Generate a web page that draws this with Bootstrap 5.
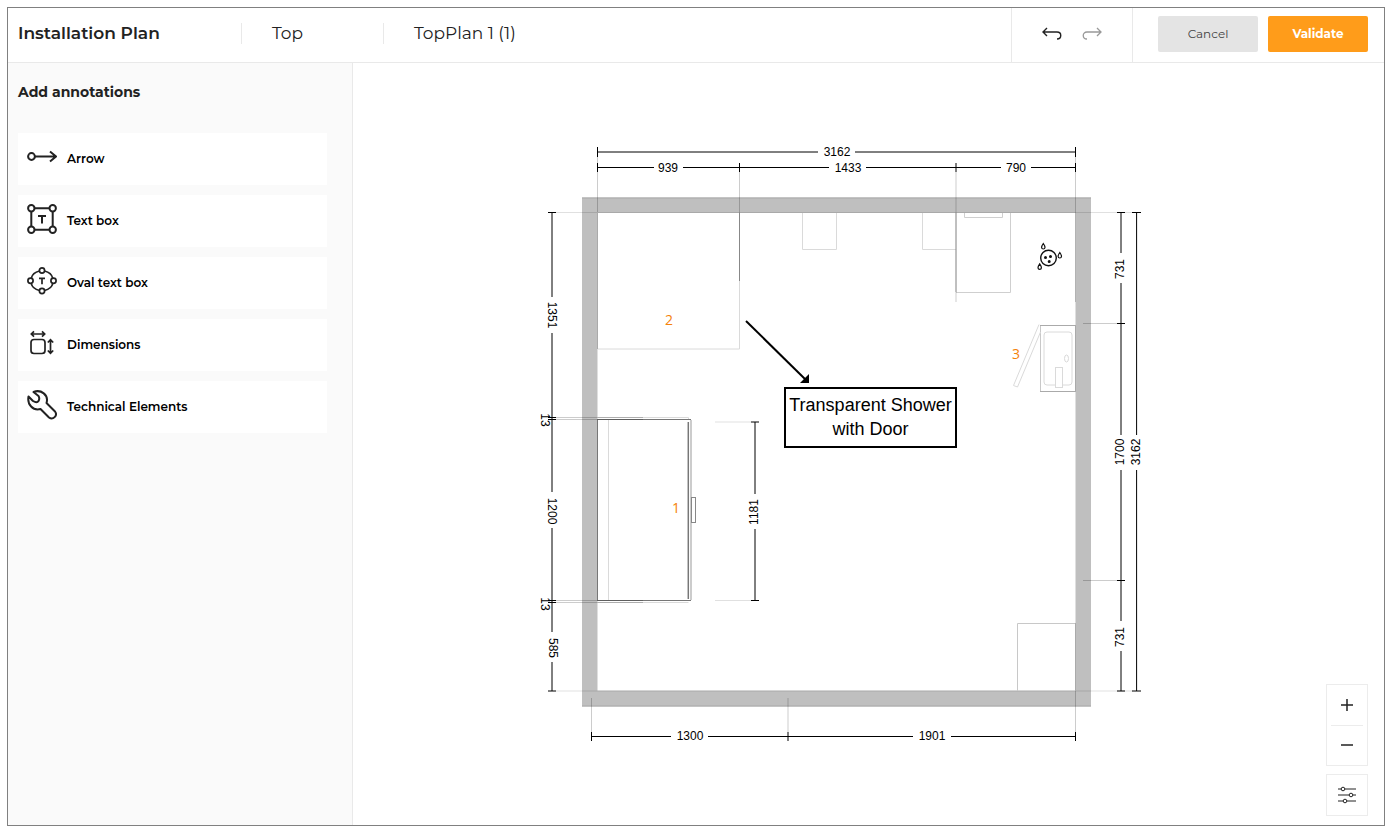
<!DOCTYPE html>
<html lang="en">
<head>
<meta charset="utf-8">
<meta name="viewport" content="width=device-width, initial-scale=1">
<title>Installation Plan</title>
<link href="https://cdn.jsdelivr.net/npm/bootstrap@5.3.0/dist/css/bootstrap.min.css" rel="stylesheet">
<style>
  body { font-family: Montserrat, Inter, sans-serif; color: #222; background: #fff; padding: 7px 10px 8px 7px; }
  .app-frame { border: 1px solid #808080; min-height: calc(100vh - 15px); }
  .topbar { border-bottom: 1px solid #e9e9e9; height: 55px; }
  .crumb { border-left: 1px solid #e9e9e9; height: 21px; font-size: 17px; line-height: 24px; padding-left: 30px; width: 142px; display: flex; align-items: center; white-space: nowrap; }
  .plan-title { font-size: 17px; line-height: 24px; font-weight: 600; width: 233px; padding-left: 10px; margin: 0; }
  .history { border: solid #e9e9e9; border-width: 0 1px; width: 122px; }
  .history .btn { width: 40px; padding: 0 0 4px; }
  .history .redo svg { stroke: #999; }
  .btn-action { width: 100px; height: 36px; border-radius: 2px; font-size: 12px; line-height: 20px; padding: 0; }
  .btn-cancel, .btn-cancel:hover { background: #e4e4e4; color: #444; }
  .btn-validate, .btn-validate:hover { background: #ff9c1a; color: #fff; font-weight: 700; }
  .actions { padding: 0 16px 3px 25px; gap: 10px; }
  .sidebar { width: 345px; background: #fafafa; border-right: 1px solid #e9e9e9; padding: 19px 25px 10px 10px; }
  .sidebar h2 { font-size: 14px; line-height: 20px; font-weight: 700; margin: 0 0 31px; }
  .tool-list { gap: 10px; }
  .tool { background: #fff; border: 0; border-radius: 0; height: 52px; padding: 0 9px 4px; gap: 10px; font-size: 12px; line-height: 18px; font-weight: 600; color: #000; }
  .tool svg, .history svg, .view-box svg { fill: none; stroke: #222; flex: none; }
  .tool span { padding-top: 3px; }
  .plan { display: block; width: 100%; height: 100%; }
  .view-tools { right: 16px; bottom: 9px; gap: 8px; }
  .view-box { width: 42px; border: 1px solid #ececec; background: #fff; padding: 0 4px; }
  .view-box .btn { display: flex; align-items: center; justify-content: center; height: 40px; width: 100%; border: 0; border-radius: 0; padding: 0 0 1px; }
  .view-box .btn + .btn { border-top: 1px solid #ececec; }
  .plan text { font: 12px "Liberation Sans", Arial, sans-serif; text-anchor: middle; fill: #000; }
  .plan .mark-no { font: 14px "Open Sans", sans-serif; fill: #f5820a; }
  .plan .note { font-size: 18px; }
  .dim { stroke: #000; fill: none; }
  .ext { stroke: #000; stroke-opacity: .2; fill: none; }
  .ext-faint { stroke-opacity: .12; }
  .fix { stroke: #dadada; fill: none; }
</style>
</head>
<body>
<div class="app-frame d-flex flex-column">
  <header class="topbar d-flex align-items-stretch">
    <div class="d-flex align-items-center pb-1">
      <h1 class="plan-title">Installation Plan</h1>
      <div class="crumb">Top</div>
      <div class="crumb">TopPlan 1 (1)</div>
    </div>
    <div class="history d-flex align-items-center justify-content-center ms-auto">
      <button class="btn border-0" type="button" aria-label="Undo"><svg width="20" height="14" viewBox="0 0 20 14"><path stroke-width="1.4" d="M5 1 1 5l4 4M1 5h14c5 0 5 7 0 7"/></svg></button>
      <button class="btn redo border-0" type="button" aria-label="Redo"><svg width="20" height="14" viewBox="0 0 20 14"><path stroke-width="1.3" d="M15 1l4 4-4 4M19 5H5c-5 0-5 7 0 7"/></svg></button>
    </div>
    <div class="actions d-flex align-items-center">
      <button class="btn btn-action btn-cancel border-0" type="button">Cancel</button>
      <button class="btn btn-action btn-validate border-0" type="button">Validate</button>
    </div>
  </header>

  <div class="d-flex flex-grow-1">
    <aside class="sidebar flex-shrink-0">
      <h2>Add annotations</h2>
      <div class="tool-list d-grid">
        <button class="tool btn d-flex align-items-center text-start" type="button">
          <svg width="30" height="30" viewBox="0 0 30 30" stroke-width="2"><circle cx="4.500" cy="14.500" r="3.400"/><path d="M8 14.500h21M23 9.500l6 5-6 5"/></svg><span>Arrow</span></button>
        <button class="tool btn d-flex align-items-center text-start" type="button">
          <svg width="30" height="30" viewBox="0 0 30 30" stroke-width="2"><circle cx="4.300" cy="4.300" r="3.200"/><circle cx="25.700" cy="4.300" r="3.200"/><circle cx="4.300" cy="25.700" r="3.200"/><circle cx="25.700" cy="25.700" r="3.200"/><path d="M7.500 4.300h15M7.500 25.700h15M4.300 7.500v15M25.700 7.500v15M11 12h8M15 12v7.500"/></svg><span>Text box</span></button>
        <button class="tool btn d-flex align-items-center text-start" type="button">
          <svg width="30" height="30" viewBox="0 0 30 30" stroke-width="1.700"><circle cx="15" cy="4.500" r="2.600"/><circle cx="15" cy="25" r="2.600"/><circle cx="3.500" cy="14.800" r="2.600"/><circle cx="26.500" cy="14.800" r="2.600"/><path d="M12.400 5C8 6 5 9 4.200 12.400M17.600 5c4.400 1 7.400 4 8.200 7.400M12.400 24.500C8 23.500 5 20.800 4.200 17.400M17.600 24.500c4.400-1 7.400-3.700 8.200-7.100M12 12.300h6M15 12.300v6"/></svg><span>Oval text box</span></button>
        <button class="tool btn d-flex align-items-center text-start" type="button">
          <svg width="30" height="30" viewBox="0 0 30 30" stroke-width="1.700"><rect x="4" y="11.500" width="14" height="14" rx="3"/><path d="M4.500 6h13M7 3.300 4.300 6 7 8.700M15 3.300 17.700 6 15 8.700M23.500 12v13M20.800 14.500l2.700-2.700 2.700 2.700M20.800 22.500l2.700 2.700 2.700-2.700"/></svg><span>Dimensions</span></button>
        <button class="tool btn d-flex align-items-center text-start" type="button">
          <svg width="30" height="30" viewBox="0 0 30 30" stroke-width="2" stroke-linejoin="round"><path d="M6.500 2C14-1 22 5 19.500 13L28 21.500c3 4-2 9-6 6L13.500 19C6 21 0 14.500 1.500 6.500L6 11q4 2.500 5.500 0t0-5z"/></svg><span>Technical Elements</span></button>
      </div>
    </aside>

    <main class="position-relative flex-grow-1">
      <svg class="plan" viewBox="353 63 1031 762" role="img" aria-label="Floor plan">
        <path fill="#bfbfbf" fill-rule="evenodd" d="M582 197.500H1091V706.500H582zM597.500 212.500V691H1075.500V212.500z"/>
        <path stroke="#a9a9a9" fill="none" d="M582 198H1091M597 212.500H1076M582 706H1091M597 691H1076"/>

        <!-- furniture -->
        <g class="fix">
          <path d="M597.500 349H739.500V281M802.500 213V249.500H836.500V213M922.500 213V249.500H956"/>
          <path stroke="#cfcfcf" d="M956 292.500H1010.500V213M964.500 213V217.500H1002.500V213"/>
          <path stroke="#c8c8c8" d="M1017.500 691V623.500H1075.500M1040.500 325V391.500"/>
          <path stroke="#aaa" d="M1040 325.500H1076M1040 391.500H1076"/>
          <rect x="1044" y="332" width="28" height="53" rx="3"/>
          <ellipse cx="1066.500" cy="358.500" rx="2" ry="3.500"/>
          <rect x="1055.500" y="367.500" width="7" height="20" fill="#fff"/>
          <path d="M1039 324.500 1013.500 385.500 1017.500 387 1040.500 332"/>
          <path d="M597 417.500H688.500V420M608.500 420V600M597 602.500H688.500"/>
        </g>
        <path stroke="#777" fill="none" d="M597.500 419V601M597 419.500H691M597 600.500H691"/>
        <path stroke="#777" stroke-width="1.500" d="M688.300 422V599"/>
        <path stroke="#bbb" d="M691 420V600" stroke-width="1.500"/>
        <rect x="691.500" y="497.500" width="4" height="25" stroke="#888" fill="none"/>
        <path stroke="#aaa" fill="none" d="M597.500 212V349M739.500 213V281M956 213V292M1075.500 325V391M1075.500 623V691"/>

        <!-- extension lines -->
        <path class="ext" d="M597.500 156V212M739.500 172V281M956 172V302M1075.500 156V302M556 417.500H643M556 419.500H643M556 600.500H643M556 602.500H643M1083 323.500H1117M1083 580.500H1117M591.500 698V732M788 698V732M1075.500 691V732"/>
        <path class="ext ext-faint" d="M715 422H751M715 600.500H751M556 212.500H597M556 691H597M1076 212.500H1133M1076 691H1133"/>

        <!-- dimension lines -->
        <path class="dim" d="M597 152H818M855 152H1076M597 167.500H654M683 167.500H829M866 167.500H1001M1031 167.500H1076M591 736.500H671M708 736.500H913M951 736.500H1076"/>
        <path class="dim" d="M597.500 147V157M1075.500 147V157M597.500 163V172M739.500 163V172M956 163V172M1075.500 163V172M591.500 732V741M788 732V741M1075.500 732V741"/>
        <path class="dim" d="M552 212V297M552 333V492M552 528V632M552 662V691M1121 212V253M1121 283V435M1121 470V621M1121 651V691M1136.600 212V435M1136.600 470V691M755 422V494M755 529V601"/>
        <path class="dim" d="M548 212.500H556M548 417.500H556M548 419.500H556M548 600.500H556M548 602.500H556M548 691H556M1117 212.500H1125M1117 323.500H1125M1117 580.500H1125M1117 691H1125M1132 212.500H1141M1132 691H1141M751 422H759M751 600.500H759"/>

        <text x="837" y="156">3162</text>
        <text x="668" y="172">939</text>
        <text x="848" y="172">1433</text>
        <text x="1016" y="172">790</text>
        <text x="690" y="740">1300</text>
        <text x="932" y="740">1901</text>
        <text transform="translate(548 315) rotate(90)">1351</text>
        <text transform="translate(541 420) rotate(90)">13</text>
        <text transform="translate(548 511) rotate(90)">1200</text>
        <text transform="translate(541 604) rotate(90)">13</text>
        <text transform="translate(549 648) rotate(90)">585</text>
        <text transform="translate(1124 269) rotate(-90)">731</text>
        <text transform="translate(1124 452) rotate(-90)">1700</text>
        <text transform="translate(1140 452) rotate(-90)">3162</text>
        <text transform="translate(1124 637) rotate(-90)">731</text>
        <text transform="translate(758 512) rotate(-90)">1181</text>

        <text class="mark-no" x="676" y="513">1</text>
        <text class="mark-no" x="669" y="325">2</text>
        <text class="mark-no" x="1016" y="359">3</text>

        <!-- water outlet -->
        <g fill="none" stroke="#111" stroke-width="1.400">
          <circle cx="1048.500" cy="258" r="7.800"/>
          <path stroke-width="1.200" d="M1043.300 243.500c-2.500 3.500-2 5.500 0 5.500s2.500-2 0-5.500zM1059.800 252.500c-2.500 3.500-2 5.500 0 5.500s2.500-2 0-5.500zM1039.700 263.800c-2.500 3.500-2 5.500 0 5.500s2.500-2 0-5.500z"/>
        </g>
        <path fill="#111" d="M1044 257.500a1.500 1.500 0 1 0 3 0 1.500 1.500 0 1 0-3 0M1049 256.500a1.500 1.500 0 1 0 3 0 1.500 1.500 0 1 0-3 0M1047.700 261.500a1.500 1.500 0 1 0 3 0 1.500 1.500 0 1 0-3 0"/>

        <path stroke="#000" stroke-width="2" d="M746 321 806 380"/>
        <path d="M809 374V383H800z"/>
        <rect x="785" y="388" width="171" height="59" fill="#fff" stroke="#000" stroke-width="2"/>
        <text class="note" x="870.500" y="411">Transparent Shower</text>
        <text class="note" x="870.500" y="435">with Door</text>
      </svg>

      <div class="view-tools position-absolute d-flex flex-column">
        <div class="view-box">
          <button class="btn" type="button" aria-label="Zoom in"><svg width="12" height="12" viewBox="0 0 12 12"><path stroke-width="1.500" d="M0 6h12M6 0v12"/></svg></button>
          <button class="btn" type="button" aria-label="Zoom out"><svg width="12" height="12" viewBox="0 0 12 12"><path stroke-width="1.500" d="M0 6h12"/></svg></button>
        </div>
        <div class="view-box">
          <button class="btn" type="button" aria-label="View settings"><svg width="20" height="18" viewBox="0 0 20 18"><path d="M1 3h3M8 3h11M1 9h11M16 9h3M1 15h5M10 15h9"/><circle cx="6" cy="3" r="1.800"/><circle cx="14" cy="9" r="1.800"/><circle cx="8" cy="15" r="1.800"/></svg></button>
        </div>
      </div>
    </main>
  </div>
</div>
<script src="https://cdn.jsdelivr.net/npm/bootstrap@5.3.0/dist/js/bootstrap.bundle.min.js"></script>
</body>
</html>
